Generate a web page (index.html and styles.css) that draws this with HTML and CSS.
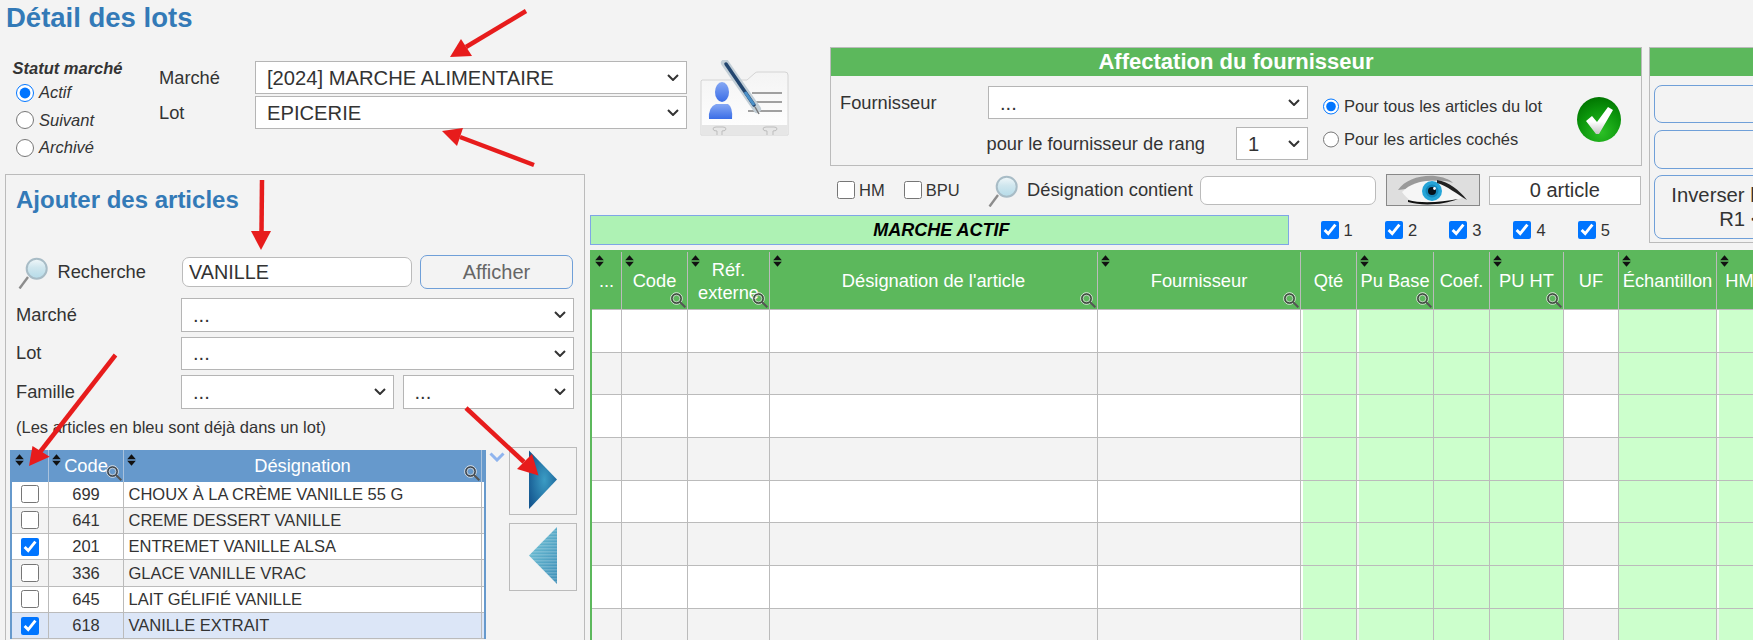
FILE: index.html
```html
<!DOCTYPE html>
<html lang="fr">
<head>
    <meta charset="UTF-8">
    <title>Détail des lots</title>
    <link rel="stylesheet" href="styles.css">
</head>
<body>
    <svg class="sprites" aria-hidden="true">
        <defs>
            <linearGradient id="glass" x1="0" y1="0" x2="0" y2="1">
                <stop offset="0" stop-color="#f2f8fa"/>
                <stop offset="0.45" stop-color="#cfe6ee"/>
                <stop offset="1" stop-color="#b5dbe8"/>
            </linearGradient>
            <symbol id="sort" viewBox="0 0 9 12">
                <path d="M4.500 .3 8.800 5.300H.2ZM.2 6.700H8.800L4.500 11.700Z" fill="#111"/>
            </symbol>
            <symbol id="mag" viewBox="0 0 16 16">
                <circle cx="6.500" cy="6.500" r="5.800" fill="none" stroke="#e4e4e4" stroke-width="1"/>
                <circle cx="6.500" cy="6.500" r="4.600" fill="none" stroke="#444" stroke-width="1.500"/>
                <circle cx="6.500" cy="6.500" r="3.300" fill="none" stroke="#cfcfcf" stroke-width=".8"/>
                <path d="M10 10 15.300 15.300" stroke="#555" stroke-width="2"/>
            </symbol>
            <symbol id="loupe" viewBox="0 0 30 33">
                <path d="M10 21 1.500 32.500" stroke="#8c8c8c" stroke-width="2.400"/>
                <circle cx="18.700" cy="12.700" r="10" fill="url(#glass)" stroke="#a8bcc6" stroke-width="2"/>
            </symbol>
        </defs>
    </svg>

    <h1 class="page-title">Détail des lots</h1>

    <div class="lots-grid">
        <section class="top-left">
            <div class="statut">
                <div class="statut-title">Statut marché</div>
                <label class="statut-row"><input type="radio" name="statut" checked>Actif</label>
                <label class="statut-row"><input type="radio" name="statut">Suivant</label>
                <label class="statut-row"><input type="radio" name="statut">Archivé</label>
            </div>
            <div class="market-form">
                <div class="market-row">
                    <label>Marché</label>
                    <select><option>[2024] MARCHE ALIMENTAIRE</option></select>
                </div>
                <div class="market-row">
                    <label>Lot</label>
                    <select><option>EPICERIE</option></select>
                </div>
            </div>
            <svg class="card-icon" width="89" height="76" viewBox="0 0 89 76">
                <defs>
                    <linearGradient id="card" x1="0" y1="0" x2="0" y2="1">
                        <stop offset="0" stop-color="#f4f4f4"/>
                        <stop offset="1" stop-color="#ffffff"/>
                    </linearGradient>
                    <linearGradient id="person" x1="0" y1="0" x2="0" y2="1">
                        <stop offset="0" stop-color="#86a8f4"/>
                        <stop offset="1" stop-color="#3a6de6"/>
                    </linearGradient>
                </defs>
                <path d="M2 20H47L55 13Q56 12 58 12H85Q88 12 88 15V75H1V21Z" fill="url(#card)" stroke="#d4d4d4"/>
                <rect x="1.500" y="65" width="86" height="10" fill="#e6e6e6"/>
                <path d="M13 69Q13 67 16 67H23Q26 67 26 69Q26 71 22 71V75M17 75V71Q13 71 13 69M63 69Q63 67 66 67H74Q77 67 77 69Q77 71 73 71V75M67 75V71Q63 71 63 69" fill="none" stroke="#bdbdbd"/>
                <path d="M52 33H82M52 42H82M48 51H82" stroke="#a0a0a0" stroke-width="2"/>
                <ellipse cx="22" cy="32" rx="7" ry="10" fill="url(#person)"/>
                <path d="M9 59Q8 47 16 44H28Q33 47 32 59Z" fill="url(#person)"/>
                <path d="M25 3 57 49" stroke="#c2ced6" stroke-width="8" stroke-linecap="round"/>
                <path d="M26 4 54 45" stroke="#23466f" stroke-width="3.500" stroke-linecap="round"/>
                <path d="M45 32 54 45" stroke="#4a90c8" stroke-width="3"/>
                <path d="M55 47 59 54" stroke="#777" stroke-width="1.500"/>
            </svg>
        </section>

        <section class="panel affect">
            <div class="panel-head">Affectation du fournisseur</div>
            <div class="affect-body">
                <div class="affect-form">
                    <div class="affect-row">
                        <label>Fournisseur</label>
                        <select class="select-four"><option>...</option></select>
                    </div>
                    <div class="affect-row affect-row-rang">
                        <label>pour le fournisseur de rang</label>
                        <select class="select-rang"><option>1</option></select>
                    </div>
                </div>
                <div class="affect-radios">
                    <label><input type="radio" name="portee" checked>Pour tous les articles du lot</label>
                    <label><input type="radio" name="portee">Pour les articles cochés</label>
                </div>
                <svg class="valid-icon" width="44" height="45" viewBox="0 0 44 45">
                    <defs>
                        <radialGradient id="validBg" cx="0.55" cy="0.78" r="0.8">
                            <stop offset="0" stop-color="#2cc026"/>
                            <stop offset="0.6" stop-color="#0c960c"/>
                            <stop offset="1" stop-color="#007400"/>
                        </radialGradient>
                        <linearGradient id="validTick" x1="0" y1="0" x2="0" y2="1">
                            <stop offset="0.55" stop-color="#ffffff"/>
                            <stop offset="1" stop-color="#c4c4c4"/>
                        </linearGradient>
                    </defs>
                    <ellipse cx="22" cy="22.500" rx="22" ry="22.500" fill="url(#validBg)"/>
                    <path d="M9 24 15 19 20 25 31 10 36 13 22 37H19Z" fill="url(#validTick)"/>
                </svg>
            </div>
        </section>

        <section class="panel side">
            <div class="panel-head"></div>
            <div class="side-body">
                <button class="side-btn side-btn-a"></button>
                <button class="side-btn side-btn-b"></button>
                <button class="side-btn side-btn-c">Inverser les rangs de<br>R1 &lt;-&gt; R2</button>
            </div>
        </section>

        <section class="filters">
            <label class="check-label"><input type="checkbox">HM</label>
            <label class="check-label check-bpu"><input type="checkbox">BPU</label>
            <svg class="loupe loupe-filter" width="30" height="33"><use href="#loupe"/></svg>
            <label class="filter-label">Désignation contient</label>
            <input type="text" class="filter-input">
            <button class="eye-btn">
                <svg width="92" height="30" viewBox="0 0 92 30">
                    <path d="M11 15C18 5 32 0 48 1 56 2 62 4 66 8 52 3 32 6 19 14Z" fill="#9a9a9a"/>
                    <path d="M15 17C24 8 36 5 48 6 60 8 70 17 75 23 62 27 35 29 24 26 20 23 17 20 15 17Z" fill="#f6f6f6"/>
                    <circle cx="45" cy="16" r="10" fill="#25a5d8"/>
                    <circle cx="45" cy="16" r="6.500" fill="#1687ba"/>
                    <circle cx="45" cy="16" r="4" fill="#06121c"/>
                    <circle cx="47.500" cy="13.500" r="1.400" fill="#fff"/>
                    <path d="M50 5C62 7 72 15 80 25 70 19 60 11 50 8Z" fill="#222"/>
                    <path d="M21 25C35 29 55 27 71 24 57 30 35 31 21 27Z" fill="#111"/>
                </svg>
            </button>
            <div class="count-box">0 article</div>
        </section>

        <section class="status-row">
            <div class="status-bar">MARCHE ACTIF</div>
            <label class="rank-check"><input type="checkbox" checked>1</label>
            <label class="rank-check"><input type="checkbox" checked>2</label>
            <label class="rank-check"><input type="checkbox" checked>3</label>
            <label class="rank-check"><input type="checkbox" checked>4</label>
            <label class="rank-check"><input type="checkbox" checked>5</label>
        </section>

        <section class="panel ajouter">
            <h2 class="ajouter-title">Ajouter des articles</h2>
            <div class="search-row">
                <svg class="loupe" width="30" height="33"><use href="#loupe"/></svg>
                <label class="search-label">Recherche</label>
                <input type="text" class="search-input" value="VANILLE">
                <button class="search-btn">Afficher</button>
            </div>
            <div class="filter-grid">
                <label>Marché</label>
                <select class="span-two"><option>...</option></select>
                <label>Lot</label>
                <select class="span-two"><option>...</option></select>
                <label>Famille</label>
                <select><option>...</option></select>
                <select><option>...</option></select>
            </div>
            <p class="hint">(Les articles en bleu sont déjà dans un lot)</p>
            <div class="pick-row">
                <table class="pick-table">
                    <colgroup>
                        <col class="pick-c1"><col class="pick-c2"><col class="pick-c3"><col class="pick-c4">
                    </colgroup>
                    <thead>
                        <tr>
                            <th><svg class="sort"><use href="#sort"/></svg></th>
                            <th><svg class="sort"><use href="#sort"/></svg>Code<svg class="mag"><use href="#mag"/></svg></th>
                            <th><svg class="sort"><use href="#sort"/></svg>Désignation<svg class="mag"><use href="#mag"/></svg></th>
                            <th></th>
                        </tr>
                    </thead>
                    <tbody>
                        <tr><td><input type="checkbox"></td><td>699</td><td>CHOUX À LA CRÈME VANILLE 55 G</td><td></td></tr>
                        <tr><td><input type="checkbox"></td><td>641</td><td>CREME DESSERT VANILLE</td><td></td></tr>
                        <tr><td><input type="checkbox" checked></td><td>201</td><td>ENTREMET VANILLE ALSA</td><td></td></tr>
                        <tr><td><input type="checkbox"></td><td>336</td><td>GLACE VANILLE VRAC</td><td></td></tr>
                        <tr><td><input type="checkbox"></td><td>645</td><td>LAIT GÉLIFIÉ VANILLE</td><td></td></tr>
                        <tr class="in-lot"><td><input type="checkbox" checked></td><td>618</td><td>VANILLE EXTRAIT</td><td></td></tr>
                    </tbody>
                </table>
                <svg class="chevron" width="16" height="10" viewBox="0 0 16 10">
                    <path d="M1.500 1.500 8 8 14.500 1.500" fill="none" stroke="#8fb4ee" stroke-width="3"/>
                </svg>
                <div class="move-btns">
                    <button class="move-btn">
                        <svg width="66" height="66" viewBox="0 0 66 66">
                            <defs>
                                <radialGradient id="triRight" cx="0.55" cy="0.5" r="0.65">
                                    <stop offset="0" stop-color="#3b9cc4"/>
                                    <stop offset="1" stop-color="#14568f"/>
                                </radialGradient>
                            </defs>
                            <path d="M19 2.500 47 31.500 19 61Z" fill="url(#triRight)"/>
                        </svg>
                    </button>
                    <button class="move-btn">
                        <svg width="66" height="66" viewBox="0 0 66 66">
                            <defs>
                                <linearGradient id="triLeft" x1="0" y1="0" x2="1" y2="1">
                                    <stop offset="0" stop-color="#74c6d8"/>
                                    <stop offset="1" stop-color="#3f8fb8"/>
                                </linearGradient>
                                <pattern id="triStripes" width="4" height="3" patternUnits="userSpaceOnUse">
                                    <rect width="4" height="1.500" fill="#ffffff" fill-opacity=".18"/>
                                </pattern>
                            </defs>
                            <path d="M47 3 19 31.500 47 60Z" fill="url(#triLeft)"/>
                            <path d="M47 3 19 31.500 47 60Z" fill="url(#triStripes)"/>
                        </svg>
                    </button>
                </div>
            </div>
        </section>

        <section class="lots-wrap">
            <table class="lots-table">
                <colgroup>
                    <col class="c-sel"><col class="c-code"><col class="c-ref"><col class="c-des"><col class="c-four"><col class="c-qte">
                    <col class="c-pub"><col class="c-coef"><col class="c-puht"><col class="c-uf"><col class="c-ech"><col class="c-hm">
                </colgroup>
                <thead>
                    <tr>
                        <th><svg class="sort"><use href="#sort"/></svg>...</th>
                        <th><svg class="sort"><use href="#sort"/></svg>Code<svg class="mag"><use href="#mag"/></svg></th>
                        <th><svg class="sort"><use href="#sort"/></svg>Réf.<br>externe<svg class="mag"><use href="#mag"/></svg></th>
                        <th><svg class="sort"><use href="#sort"/></svg>Désignation de l'article<svg class="mag"><use href="#mag"/></svg></th>
                        <th><svg class="sort"><use href="#sort"/></svg>Fournisseur<svg class="mag"><use href="#mag"/></svg></th>
                        <th>Qté</th>
                        <th><svg class="sort"><use href="#sort"/></svg>Pu Base<svg class="mag"><use href="#mag"/></svg></th>
                        <th>Coef.</th>
                        <th><svg class="sort"><use href="#sort"/></svg>PU HT<svg class="mag"><use href="#mag"/></svg></th>
                        <th>UF</th>
                        <th><svg class="sort"><use href="#sort"/></svg>Échantillon</th>
                        <th><svg class="sort"><use href="#sort"/></svg>HM</th>
                    </tr>
                </thead>
                <tbody>
                    <tr><td></td><td></td><td></td><td></td><td></td><td></td><td></td><td></td><td></td><td></td><td></td><td></td></tr>
                    <tr><td></td><td></td><td></td><td></td><td></td><td></td><td></td><td></td><td></td><td></td><td></td><td></td></tr>
                    <tr><td></td><td></td><td></td><td></td><td></td><td></td><td></td><td></td><td></td><td></td><td></td><td></td></tr>
                    <tr><td></td><td></td><td></td><td></td><td></td><td></td><td></td><td></td><td></td><td></td><td></td><td></td></tr>
                    <tr><td></td><td></td><td></td><td></td><td></td><td></td><td></td><td></td><td></td><td></td><td></td><td></td></tr>
                    <tr><td></td><td></td><td></td><td></td><td></td><td></td><td></td><td></td><td></td><td></td><td></td><td></td></tr>
                    <tr><td></td><td></td><td></td><td></td><td></td><td></td><td></td><td></td><td></td><td></td><td></td><td></td></tr>
                    <tr><td></td><td></td><td></td><td></td><td></td><td></td><td></td><td></td><td></td><td></td><td></td><td></td></tr>
                </tbody>
            </table>
        </section>
    </div>

    <!-- annotation arrows drawn over the page -->
    <svg class="annotations" width="1753" height="640" viewBox="0 0 1753 640" aria-hidden="true">
        <g stroke="#e71c1c" stroke-width="4.500" fill="#e71c1c">
            <path d="M526 11 466 47"/>
            <path d="M450 57 461 39 472 56Z" stroke="none"/>
            <path d="M534 165 460 137"/>
            <path d="M442 131 463 128 457 146Z" stroke="none"/>
            <path d="M262 180 261.500 232"/>
            <path d="M261 250 251 231 271 231Z" stroke="none"/>
            <path d="M115.500 355 40 452"/>
            <path d="M29 466 32.500 446 49.700 456.700Z" stroke="none"/>
            <path d="M466 408 524 462"/>
            <path d="M538.500 475.500 517 469 532 454Z" stroke="none"/>
        </g>
    </svg>
</body>
</html>
```

FILE: styles.css
```css
:root {
    --bg-page: #f3f3f3;
    --text: #333;
    --title: #337ab7;
    --green: #5cb85c;
    --blue-head: #6699cc;
    --line: #bbb;
    --btn-line: #6f9fd8;
}

* {
    margin: 0;
    padding: 0;
    box-sizing: border-box;
}

html, body {
    width: 1753px;
    height: 640px;
    overflow: hidden;
}

body {
    position: relative;
    font-family: "Liberation Sans", Arial, sans-serif;
    font-size: 18.3px;
    color: var(--text);
    background-color: var(--bg-page);
}

select, input, button {
    font-family: inherit;
    color: var(--text);
}

select {
    appearance: none;
    height: 33px;
    font-size: 20.2px;
    padding-left: 11px;
    background-color: #fff;
    background-image: url("data:image/svg+xml,%3Csvg xmlns='http://www.w3.org/2000/svg' width='12' height='7' viewBox='0 0 12 7'%3E%3Cpath d='M1 1 6 6 11 1' fill='none' stroke='%23333' stroke-width='2'/%3E%3C/svg%3E");
    background-repeat: no-repeat;
    background-position: right 7px center;
    border: 1px solid #b5b5b5;
    border-radius: 0;
}

input[type="radio"], input[type="checkbox"] {
    width: 18px;
    height: 18px;
    margin: 0;
    flex: none;
}

.sprites {
    position: absolute;
    width: 0;
    height: 0;
}

.annotations {
    position: absolute;
    left: 0;
    top: 0;
    pointer-events: none;
}

.page-title {
    height: 47px;
    padding-left: 6px;
    font-size: 27.5px;
    line-height: 36px;
    color: var(--title);
}

.lots-grid {
    display: grid;
    grid-template-columns: 580px 5px 240px 812px 6.5px 300px;
    grid-template-rows: 127px 41px 35px 400px;
    margin-left: 5px;
}

/* top left: statut, marché, lot */
.top-left {
    grid-column: 1 / 4;
    grid-row: 1;
    display: flex;
    align-items: flex-start;
}

.statut {
    width: 154px;
    padding: 11px 0 0 7.5px;
}

.statut-title {
    font-size: 16.5px;
    line-height: 20px;
    font-weight: bold;
    font-style: italic;
    margin-bottom: 1px;
}

.statut-row {
    display: flex;
    align-items: center;
    gap: 5px;
    height: 27.5px;
    padding-left: 3.5px;
    font-size: 16.5px;
    font-style: italic;
}

.market-form {
    display: flex;
    flex-direction: column;
    gap: 2px;
    margin-top: 14px;
}

.market-row {
    display: flex;
    align-items: center;
}

.market-row label {
    width: 96px;
}

.market-row select {
    width: 432px;
}

.card-icon {
    margin: 13px 0 0 13px;
}

/* panels */
.panel {
    border: 1px solid var(--line);
}

.panel-head {
    height: 28px;
    line-height: 28px;
    font-size: 22px;
    font-weight: bold;
    text-align: center;
    color: #fff;
    background-color: var(--green);
}

.affect {
    grid-column: 4;
    grid-row: 1;
    height: 119px;
}

.affect-body {
    display: flex;
    align-items: flex-start;
    padding: 10px 0 0 9px;
}

.affect-form {
    display: flex;
    flex-direction: column;
    gap: 8px;
    width: 468px;
}

.affect-row {
    display: flex;
    align-items: center;
}

.affect-row label {
    width: 148px;
}

.affect-row-rang {
    padding-left: 146.500px;
    justify-content: space-between;
}

.affect-row-rang label {
    width: auto;
}

.select-four {
    width: 320px;
}

.select-rang {
    width: 72px;
}

.affect-radios {
    display: flex;
    flex-direction: column;
    margin: 4px 0 0 14.500px;
    font-size: 16.5px;
}

.affect-radios label {
    display: flex;
    align-items: center;
    gap: 5px;
    height: 33px;
}

.affect-radios input {
    width: 16.500px;
    height: 16.500px;
}

.valid-icon {
    margin: 11px 20px 0 auto;
}

.side {
    grid-column: 6;
    grid-row: 1 / 4;
    height: 196px;
}

.side-body {
    display: flex;
    flex-direction: column;
    padding: 9px 0 0 4px;
}

.side-btn {
    width: 225px;
    font-size: 20.3px;
    line-height: 24px;
    background-color: var(--bg-page);
    border: 1px solid var(--btn-line);
    border-radius: 8px;
}

.side-btn-a {
    height: 38px;
}

.side-btn-b {
    height: 38.5px;
    margin-top: 7px;
}

.side-btn-c {
    height: 64px;
    margin-top: 6.5px;
}

/* filter row above the table */
.filters {
    grid-column: 4;
    grid-row: 2;
    display: flex;
    align-items: center;
    height: 32px;
    padding-left: 7px;
}

.check-label {
    display: flex;
    align-items: center;
    gap: 4px;
    font-size: 16.5px;
}

.check-bpu {
    margin-left: 19px;
}

.loupe-filter {
    margin-left: 28px;
}

.filter-label {
    margin-left: 9.5px;
}

.filter-input {
    width: 176.500px;
    height: 29px;
    margin-left: 7px;
    background-color: #fff;
    border: 1px solid var(--line);
    border-radius: 7px;
}

.eye-btn {
    width: 94px;
    height: 32px;
    margin-left: 9.500px;
    background-color: #dedede;
    border: 1px solid #888;
}

.eye-btn svg {
    display: block;
}

.count-box {
    width: 152px;
    height: 29px;
    margin-left: 9px;
    line-height: 27px;
    font-size: 20px;
    text-align: center;
    background-color: #fff;
    border: 1px solid var(--line);
}

/* marche actif bar and rank checks */
.status-row {
    grid-column: 3 / 5;
    grid-row: 3;
    display: flex;
    align-items: flex-start;
}

.status-bar {
    width: 703px;
    height: 30px;
    margin-right: 32px;
    padding-left: 4px;
    line-height: 28px;
    font-size: 18px;
    font-weight: bold;
    font-style: italic;
    text-align: center;
    color: #000;
    background-color: #aef2b4;
    border: 1px solid #7fa6e6;
}

.rank-check {
    display: flex;
    align-items: center;
    gap: 5px;
    width: 64.700px;
    height: 30px;
    font-size: 16.5px;
}

/* left panel */
.ajouter {
    grid-column: 1;
    grid-row: 2 / 5;
    padding: 10px 0 0 10px;
}

.ajouter-title {
    font-size: 24px;
    line-height: 30px;
    color: var(--title);
}

.search-row {
    display: flex;
    align-items: center;
    height: 34px;
    margin-top: 40px;
}

.loupe {
    flex: none;
}

.search-row .loupe {
    margin-left: 2px;
}

.search-label {
    width: 134px;
    padding-left: 9.500px;
}

.search-input {
    width: 230px;
    height: 30px;
    padding-left: 6px;
    font-size: 19.8px;
    background-color: #fff;
    border: 1px solid var(--line);
    border-radius: 7px;
}

.search-btn {
    width: 153px;
    height: 34px;
    margin-left: 8px;
    font-size: 20px;
    color: #666;
    background-color: var(--bg-page);
    border: 1px solid var(--btn-line);
    border-radius: 7px;
}

.filter-grid {
    display: grid;
    grid-template-columns: 156.500px 213px 171.500px;
    column-gap: 8.500px;
    row-gap: 5px;
    align-items: center;
    width: 558px;
    margin-top: 9px;
}

.filter-grid select {
    width: 100%;
    height: 33.500px;
}

.filter-grid .span-two {
    grid-column: 2 / 4;
}

.hint {
    margin-top: 8px;
    font-size: 16.5px;
    line-height: 20px;
}

.pick-row {
    display: flex;
    align-items: flex-start;
    margin: 10px 0 0 -6px;
}

.pick-table {
    width: 476px;
    margin-top: 3px;
    table-layout: fixed;
    border-spacing: 0;
    font-size: 16.5px;
    background-color: #fff;
    border-left: 2px solid var(--blue-head);
    border-right: 2px solid var(--blue-head);
}

.pick-c1 { width: 36px; }
.pick-c2 { width: 75px; }
.pick-c3 { width: 358px; }
.pick-c4 { width: 3px; }

.pick-table th {
    position: relative;
    height: 32px;
    font-size: 18.3px;
    font-weight: normal;
    color: #fff;
    background-color: var(--blue-head);
    border-left: 1px solid #a9c2dd;
}

.pick-table th:first-child, .pick-table td:first-child {
    border-left: none;
}

.pick-table td {
    height: 26.300px;
    text-align: center;
    border-left: 1px solid var(--line);
    border-bottom: 1px solid var(--line);
}

.pick-table td input {
    display: block;
    margin: 0 auto;
}

.pick-table td:nth-child(3) {
    padding-left: 4.500px;
    text-align: left;
    white-space: nowrap;
}

.pick-table tbody tr:nth-child(even) {
    background-color: var(--bg-page);
}

.pick-table tbody tr.in-lot {
    background-color: #dce6f7;
}

.sort {
    position: absolute;
    left: 3px;
    top: 4px;
    width: 9px;
    height: 12px;
}

.mag {
    position: absolute;
    right: 1px;
    bottom: 1px;
    width: 16px;
    height: 16px;
}

.chevron {
    flex: none;
    margin: 5px 3.500px 0 3px;
}

.move-btns {
    display: flex;
    flex-direction: column;
    gap: 8px;
}

.move-btn {
    width: 68.400px;
    height: 68.400px;
    background-color: var(--bg-page);
    border: 1px solid var(--line);
}

.move-btn svg {
    display: block;
    margin: 0 auto;
}

/* main table */
.lots-wrap {
    grid-column: 3 / 7;
    grid-row: 4;
}

.lots-table {
    width: 1172px;
    table-layout: fixed;
    border-spacing: 0;
    background-color: #fff;
    border-top: 2px solid var(--green);
    border-left: 2px solid var(--green);
}

.c-sel { width: 29px; }
.c-code { width: 66px; }
.c-ref { width: 82px; }
.c-des { width: 328px; }
.c-four { width: 203px; }
.c-qte { width: 56px; }
.c-pub { width: 77px; }
.c-coef { width: 56px; }
.c-puht { width: 74px; }
.c-uf { width: 55px; }
.c-ech { width: 98px; }
.c-hm { width: 46px; }

.lots-table th {
    position: relative;
    height: 58px;
    font-size: 18.3px;
    line-height: 23px;
    font-weight: normal;
    white-space: nowrap;
    color: #fff;
    background-color: var(--green);
    border-left: 1px solid var(--line);
    border-bottom: 1px solid var(--line);
}

.lots-table th .sort {
    top: 3px;
}

.lots-table td {
    height: 42.700px;
    border-left: 1px solid var(--line);
    border-bottom: 1px solid var(--line);
}

.lots-table th:first-child, .lots-table td:first-child {
    border-left: none;
}

.lots-table tbody tr:nth-child(even) {
    background-color: var(--bg-page);
}

.lots-table td:nth-child(n+6):nth-child(-n+9), .lots-table td:nth-child(n+11) {
    background-color: #ccffcc;
}

/* Qté, Pu Base and HM keep a sliver of the row colour on the left */
.lots-table td:nth-child(6), .lots-table td:nth-child(7), .lots-table td:nth-child(12) {
    padding-left: 2px;
    background-clip: content-box;
}
```
